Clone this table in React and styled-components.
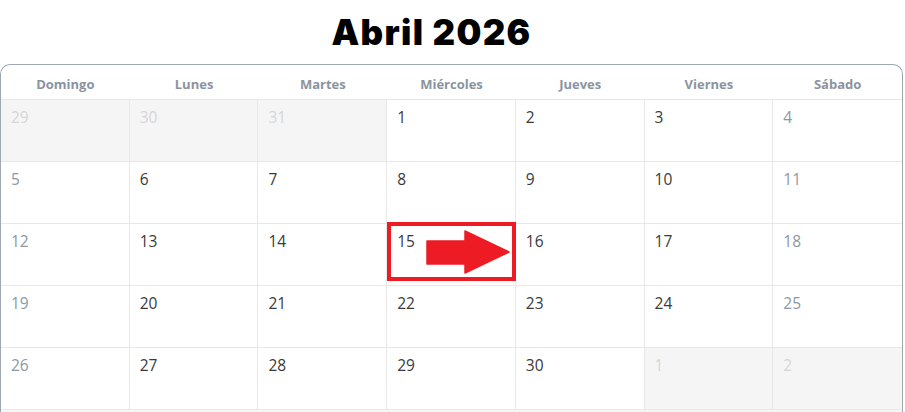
import React from "react";
import styled, { createGlobalStyle } from "styled-components";

const Global = createGlobalStyle`
  html, body { margin: 0; padding: 0; background: #fff; }
  body { font-family: "Open Sans", "Liberation Sans", sans-serif; }
`;

const Page = styled.div`
  width: 905px;
  height: 412px;
  overflow: hidden;
`;

const Title = styled.h1`
  margin: 0;
  padding: 11px 42px 0 0;
  height: 55px;
  box-sizing: border-box;
  text-align: center;
  font-family: "Inter", "Liberation Sans", sans-serif;
  font-weight: 900;
  font-size: 35px;
  line-height: 42px;
  letter-spacing: 1.3px;
  color: #000;
`;

const Calendar = styled.div`
  width: 903px;
  box-sizing: border-box;
  border: 1px solid #9ea8b3;
  border-bottom: none;
  border-radius: 10px 10px 0 0;
  margin-top: 9px;
  overflow: hidden;
`;

const HeaderRow = styled.div`
  display: grid;
  grid-template-columns: repeat(7, 1fr);
  height: 35px;
  border-bottom: 1px solid #e8e8e8;
  box-sizing: border-box;
`;

const DayName = styled.div`
  display: flex;
  align-items: center;
  justify-content: center;
  padding-top: 3px;
  font-size: 13px;
  font-weight: 700;
  color: #8a94a0;
`;

const Grid = styled.div`
  display: grid;
  grid-template-columns: repeat(7, 1fr);
  grid-auto-rows: 62px;
`;

const Cell = styled.div`
  position: relative;
  box-sizing: border-box;
  border-right: ${(p) => (p.$last ? "none" : "1px solid #e8e8e8")};
  border-bottom: 1px solid #e8e8e8;
  background: ${(p) => (p.$muted ? "#f5f5f5" : "#fff")};
  padding: 5px 10px;
  font-size: 15.5px;
  line-height: 24px;
  color: ${(p) => (p.$muted ? "#d6d6d6" : p.$weekend ? "#8d98a4" : "#3a3a3a")};
`;

const Footer = styled.div`
  height: 4px;
  background: #f6f6f6;
`;

const Highlight = styled.div`
  position: absolute;
  left: 0px;
  top: -2px;
  width: 129px;
  height: 59px;
  box-sizing: border-box;
  border: 4px solid #ed1c24;
  pointer-events: none;
`;

const Arrow = styled.svg`
  position: absolute;
  left: 39px;
  top: 7px;
  overflow: visible;
`;

const days = ["Domingo", "Lunes", "Martes", "Miércoles", "Jueves", "Viernes", "Sábado"];

const cells = [];
[29, 30, 31].forEach((d) => cells.push({ d, muted: true }));
for (let d = 1; d <= 30; d++) cells.push({ d });
[1, 2].forEach((d) => cells.push({ d, muted: true }));

export default function App() {
  return (
    <Page>
      <Global />
      <Title>Abril 2026</Title>
      <Calendar>
        <HeaderRow>
          {days.map((n) => (
            <DayName key={n}>{n}</DayName>
          ))}
        </HeaderRow>
        <Grid>
          {cells.map((c, i) => {
            const col = i % 7;
            const weekend = col === 0 || col === 6;
            const hl = !c.muted && c.d === 15;
            return (
              <Cell key={i} $muted={c.muted} $weekend={weekend} $last={col === 6}>
                {c.d}
                {hl && (
                  <>
                    <Highlight />
                    <Arrow width="84" height="44" viewBox="0 0 84 44">
                      <polygon
                        points="1,10 39,10 39,0 83,21 39,42 39,33 1,33"
                        fill="#ed1c24"
                        stroke="#ed1c24"
                        strokeWidth="1.5"
                        strokeLinejoin="round"
                      />
                    </Arrow>
                  </>
                )}
              </Cell>
            );
          })}
        </Grid>
        <Footer />
      </Calendar>
    </Page>
  );
}
